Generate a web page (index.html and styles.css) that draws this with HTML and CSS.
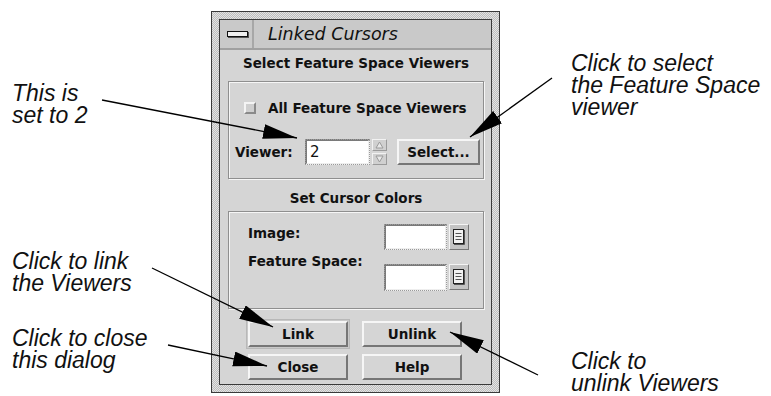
FILE: index.html
```html
<!DOCTYPE html>
<html>
<head>
<meta charset="utf-8">
<link rel="stylesheet" href="styles.css">
</head>
<body>
<div class="page">
  <div class="dialog">
    <div class="win">
      <div class="titlebar">
        <div class="menubtn"><span class="bar"></span></div>
        <div class="title">Linked Cursors</div>
      </div>
      <div class="content">
        <div class="heading">Select Feature Space Viewers</div>
        <div class="group g1">
          <div class="check"><span class="box"></span><span>All Feature Space Viewers</span></div>
          <div class="viewer-row">
            <span class="lbl">Viewer:</span>
            <div class="field num">2</div>
            <div class="spin">
              <span class="arr">
                <svg width="11" height="10" viewBox="0 0 11 10"><path d="M5.5 2 L9 8 L2 8 Z" fill="#e8e8e8" stroke="#9a9a9a" stroke-width="1"/></svg>
              </span>
              <span class="arr">
                <svg width="11" height="10" viewBox="0 0 11 10"><path d="M2 2 L9 2 L5.5 8 Z" fill="#e8e8e8" stroke="#9a9a9a" stroke-width="1"/></svg>
              </span>
            </div>
            <div class="btn select">Select...</div>
          </div>
        </div>
        <div class="heading h2">Set Cursor Colors</div>
        <div class="group g2">
          <div class="labels">
            <span>Image:</span>
            <span>Feature Space:</span>
          </div>
          <div class="pickers">
            <div class="picker">
              <div class="field color"></div>
              <div class="optbtn">
                <svg width="12" height="16" viewBox="0 0 12 16"><rect x="0.5" y="0.5" width="10" height="14" fill="#f2f2f2" stroke="#222"/><path d="M2.5 4.5 H8.5 M2.5 7.5 H8.5 M2.5 10.5 H8.5" stroke="#555" stroke-width="1"/><path d="M11.5 1 V15.5 H1" stroke="#555" fill="none"/></svg>
              </div>
            </div>
            <div class="picker p2">
              <div class="field color"></div>
              <div class="optbtn">
                <svg width="12" height="16" viewBox="0 0 12 16"><rect x="0.5" y="0.5" width="10" height="14" fill="#f2f2f2" stroke="#222"/><path d="M2.5 4.5 H8.5 M2.5 7.5 H8.5 M2.5 10.5 H8.5" stroke="#555" stroke-width="1"/><path d="M11.5 1 V15.5 H1" stroke="#555" fill="none"/></svg>
              </div>
            </div>
          </div>
        </div>
        <div class="actions">
          <div class="defring"><div class="btn">Link</div></div>
          <div class="btn">Unlink</div>
          <div class="btn">Close</div>
          <div class="btn">Help</div>
        </div>
      </div>
    </div>
  </div>

  <div class="note n1">This is<br>set to 2</div>
  <div class="note n2">Click to select<br>the Feature Space<br>viewer</div>
  <div class="note n3">Click to link<br>the Viewers</div>
  <div class="note n4">Click to close<br>this dialog</div>
  <div class="note n5">Click to<br>unlink Viewers</div>

  <svg class="callouts" width="771" height="396" viewBox="0 0 771 396">
    <defs>
      <marker id="ah" markerUnits="userSpaceOnUse" markerWidth="36" markerHeight="16" refX="34" refY="7.5" orient="auto">
        <path d="M0 0 L34 7.5 L0 15 Z" fill="#000"/>
      </marker>
    </defs>
    <g stroke="#000" stroke-width="1.3" fill="none">
      <line x1="102" y1="100" x2="297" y2="138" marker-end="url(#ah)"/>
      <line x1="552" y1="78" x2="470" y2="137" marker-end="url(#ah)"/>
      <line x1="152" y1="268" x2="273" y2="327" marker-end="url(#ah)"/>
      <line x1="168" y1="345" x2="267" y2="366" marker-end="url(#ah)"/>
      <line x1="538" y1="375" x2="450" y2="332" marker-end="url(#ah)"/>
    </g>
  </svg>
</div>
</body>
</html>
```
FILE: styles.css
```css
* { box-sizing: border-box; }
html, body { margin: 0; padding: 0; background: #fff; }
.page {
  position: relative;
  width: 771px;
  height: 396px;
  overflow: hidden;
  padding: 11px 0 0 211px;
}
.dialog {
  width: 289px;
  height: 382px;
  border: 1px solid #3a3a3a;
  padding: 7px;
  background: repeating-conic-gradient(#bdbdbd 0 25%, #e4e4e4 0 50%) 0 0 / 2px 2px;
}
.win {
  height: 100%;
  border: 1px solid #3a3a3a;
  background: #d5d5d5;
  display: flex;
  flex-direction: column;
  font-family: "DejaVu Sans", sans-serif;
  font-weight: bold;
  font-size: 13.5px;
  color: #111;
}
.titlebar {
  height: 30px;
  display: flex;
  background: #c9c9c9;
  border-bottom: 2px solid #a0a0a0;
}
.menubtn {
  width: 34px;
  display: flex;
  align-items: center;
  justify-content: flex-start;
  padding-left: 7px;
  border-right: 2px solid #a7a7a7;
}
.bar {
  display: block;
  width: 21px;
  height: 6px;
  background: #f0f0f0;
  border: 1px solid #111;
  box-shadow: 1px 1px 0 #555;
}
.title {
  padding-left: 14px;
  font-style: italic;
  font-weight: normal;
  font-size: 17.5px;
  line-height: 28px;
  color: #111;
}
.content {
  flex: 1;
  padding: 5px 0 0 8px;
}
.heading {
  line-height: 16px;
  text-align: center;
  width: 256px;
}
.h2 { margin-top: 11px; }
.group {
  width: 256px;
  height: 98px;
  border: 1px solid #8f8f8f;
  box-shadow: inset 1px 1px 0 #f6f6f6, 1px 1px 0 #f6f6f6;
}
.g1 {
  margin-top: 10px;
  padding: 18px 0 0 6px;
}
.check {
  display: flex;
  align-items: center;
  gap: 12px;
  padding-left: 9px;
  line-height: 16px;
}
.box {
  width: 12px;
  height: 12px;
  background: #cfcfcf;
  border: 2px solid;
  border-color: #f4f4f4 #8a8a8a #8a8a8a #f4f4f4;
}
.viewer-row {
  margin-top: 23px;
  display: flex;
  align-items: center;
  height: 26px;
}
.lbl { width: 70px; }
.field {
  background: #fff;
  border: 2px solid;
  border-color: #7a7a7a #eeeeee #eeeeee #7a7a7a;
  outline: 1px dotted #9a9a9a;
  outline-offset: -1px;
}
.num {
  width: 65px;
  height: 26px;
  font-weight: normal;
  font-size: 15px;
  line-height: 22px;
  padding-left: 3px;
}
.spin {
  margin-left: 2px;
  width: 15px;
  display: flex;
  flex-direction: column;
  gap: 2px;
}
.arr {
  height: 12px;
  display: flex;
  align-items: center;
  justify-content: center;
  background: #d0d0d0;
  border: 1px solid;
  border-color: #f2f2f2 #9a9a9a #9a9a9a #f2f2f2;
}
.btn {
  height: 26px;
  display: flex;
  align-items: center;
  justify-content: center;
  background: #d5d5d5;
  border: 2px solid;
  border-color: #f6f6f6 #767676 #767676 #f6f6f6;
  line-height: 16px;
}
.select {
  width: 83px;
  margin-left: 10px;
}
.g2 {
  margin-top: 5px;
  display: flex;
  padding: 12px 14px 0 19px;
}
.labels {
  flex: 1;
  display: flex;
  flex-direction: column;
  gap: 12px;
  padding-top: 1px;
  line-height: 16px;
}
.pickers {
  display: flex;
  flex-direction: column;
  gap: 14px;
}
.picker {
  display: flex;
  gap: 2px;
}
.color {
  width: 63px;
  height: 26px;
}
.p2 .color { height: 27px; }
.optbtn {
  width: 20px;
  height: 26px;
  display: flex;
  align-items: center;
  justify-content: center;
  background: #c4c4c4;
  border: 1px solid;
  border-color: #f4f4f4 #777 #777 #f4f4f4;
}
.actions {
  margin-top: 12px;
  padding-left: 20px;
  display: grid;
  grid-template-columns: 100px 100px;
  column-gap: 14px;
  row-gap: 7px;
}
.defring {
  margin: -2px;
  padding: 1px;
  border: 1px solid #b8b8b8;
  background: #c9c9c9;
}
.note {
  position: absolute;
  font-family: "Liberation Sans", Arial, sans-serif;
  font-style: italic;
  font-size: 23px;
  line-height: 22px;
  color: #111;
  white-space: nowrap;
}
.n1 { left: 12px; top: 82px; }
.n2 { left: 571px; top: 52px; }
.n3 { left: 12px; top: 250px; }
.n4 { left: 12px; top: 327px; }
.n5 { left: 571px; top: 350px; }
.callouts {
  position: absolute;
  left: 0;
  top: 0;
  pointer-events: none;
}
```
